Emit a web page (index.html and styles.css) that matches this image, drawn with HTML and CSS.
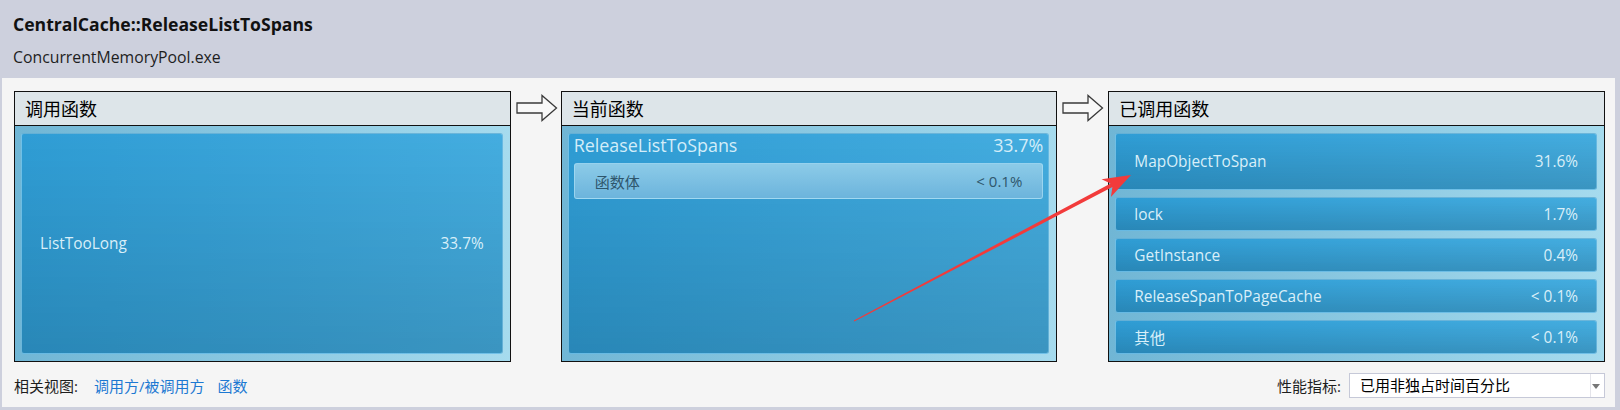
FILE: index.html
```html
<!DOCTYPE html>
<html>
<head>
  <title>CentralCache::ReleaseListToSpans</title>
  <link rel="stylesheet" href="styles.css">
</head>
<body>
  <div class="window">
    <header class="title-bar">
      <h1 class="func-name">CentralCache::ReleaseListToSpans</h1>
      <div class="module-name">ConcurrentMemoryPool.exe</div>
    </header>

    <main class="content">
      <div class="panels">
        <!-- callers -->
        <section class="panel">
          <div class="panel-head">调用函数</div>
          <div class="panel-body">
            <div class="tile tile-fill">
              <span>ListTooLong</span>
              <span>33.7%</span>
            </div>
          </div>
        </section>

        <div class="flow-arrow">
          <svg width="42" height="28" viewBox="0 0 42 28">
            <path d="M1 9 H26 V1.5 L40.5 14 L26 26.5 V19 H1 Z" fill="#f8f8f8" stroke="#3a3a3a" stroke-width="1.3"/>
          </svg>
        </div>

        <!-- current function -->
        <section class="panel">
          <div class="panel-head">当前函数</div>
          <div class="panel-body">
            <div class="tile tile-current">
              <div class="current-title">
                <span>ReleaseListToSpans</span>
                <span>33.7%</span>
              </div>
              <div class="body-row">
                <span>函数体</span>
                <span>&lt; 0.1%</span>
              </div>
            </div>
          </div>
        </section>

        <div class="flow-arrow">
          <svg width="42" height="28" viewBox="0 0 42 28">
            <path d="M1 9 H26 V1.5 L40.5 14 L26 26.5 V19 H1 Z" fill="#f8f8f8" stroke="#3a3a3a" stroke-width="1.3"/>
          </svg>
        </div>

        <!-- callees -->
        <section class="panel">
          <div class="panel-head">已调用函数</div>
          <div class="panel-body callee-list">
            <div class="tile tile-big"><span>MapObjectToSpan</span><span>31.6%</span></div>
            <div class="tile"><span>lock</span><span>1.7%</span></div>
            <div class="tile"><span>GetInstance</span><span>0.4%</span></div>
            <div class="tile"><span>ReleaseSpanToPageCache</span><span>&lt; 0.1%</span></div>
            <div class="tile"><span>其他</span><span>&lt; 0.1%</span></div>
          </div>
        </section>
      </div>

      <div class="footer-row">
        <div class="related">
          <span class="related-label">相关视图:</span>
          <a href="#" class="view-link">调用方/被调用方</a>
          <a href="#" class="view-link">函数</a>
        </div>
        <div class="metric">
          <span class="metric-label">性能指标:</span>
          <div class="metric-select">
            <span>已用非独占时间百分比</span>
            <span class="select-sep"></span>
            <span class="select-caret"></span>
          </div>
        </div>
      </div>
    </main>

    <!-- red annotation arrow drawn over the screenshot -->
    <svg class="annotation" width="1620" height="410" viewBox="0 0 1620 410">
      <polygon fill="#f23b3b" points="853.8,320.4 1110.6,183.5 1101.5,179.2 1131,175 1110.9,196.9 1112.4,187.1 854.2,321.6"/>
    </svg>
  </div>
</body>
</html>
```

FILE: styles.css
```css
body {
  margin: 0;
  font-family: "Open Sans", "Noto Sans CJK SC", sans-serif;
  color: #1e1e1e;
}

.window {
  position: relative;
  width: 1620px;
  height: 410px;
  background-color: #cdd0dd;
  overflow: hidden;
}

.title-bar {
  height: 78px;
  padding-left: 13px;
  box-sizing: border-box;
  padding-top: 12px;
}

.func-name {
  margin: 0;
  font-size: 17.6px;
  line-height: 24px;
  font-weight: bold;
  color: #111;
}

.module-name {
  margin-top: 10px;
  font-size: 15.8px;
  line-height: 22px;
  color: #1e1e1e;
}

.content {
  height: 329px;
  margin: 0 5px 0 2px;
  padding: 13px 10px 0 12px;
  box-sizing: border-box;
  background-color: #f5f5f5;
}

.panels {
  display: grid;
  grid-template-columns: 1fr 50px 1fr 51px 1fr;
  height: 271px;
}

.panel {
  display: flex;
  flex-direction: column;
  border: 1px solid #111;
}

.panel-head {
  height: 33px;
  border-bottom: 1px solid #111;
  background-color: #dde5e9;
  padding-left: 10px;
  font-family: "Noto Sans CJK SC", sans-serif;
  font-size: 18px;
  line-height: 32px;
  color: #000;
}

.panel-body {
  flex-grow: 1;
  display: flex;
  flex-direction: column;
  padding: 7px 7px 7px 6px;
  background: linear-gradient(to right, #70b6d5, #a6dbee);
}

.flow-arrow {
  padding: 3px 0 0 5px;
}

.flow-arrow svg {
  display: block;
}

.tile {
  display: flex;
  justify-content: space-between;
  align-items: center;
  height: 34px;
  box-sizing: border-box;
  padding: 0 18px;
  border: 1px solid rgba(150, 210, 238, 0.55);
  border-radius: 3px;
  background:
    linear-gradient(to bottom, rgba(0, 0, 0, 0), rgba(0, 0, 0, 0.14)),
    linear-gradient(to right, #2f9dd5, #44ade0);
  font-size: 15.4px;
  color: #d9eff9;
}

.tile-fill {
  flex-grow: 1;
  height: auto;
}

.callee-list {
  gap: 7px;
}

.tile-big {
  height: 57px;
}

.tile-current {
  flex-grow: 1;
  height: auto;
  display: block;
  padding: 0 5px;
}

.current-title {
  display: flex;
  justify-content: space-between;
  font-size: 17.9px;
  line-height: 22px;
  color: #d3edf9;
}

.body-row {
  display: flex;
  justify-content: space-between;
  align-items: center;
  height: 36px;
  box-sizing: border-box;
  margin-top: 7px;
  padding: 0 20px;
  border: 1px solid rgba(170, 222, 245, 0.7);
  border-radius: 3px;
  background: linear-gradient(to bottom, #8ccbe8, #6cb4dc);
  font-size: 15px;
  color: #2f566c;
}

.footer-row {
  display: flex;
  justify-content: space-between;
  align-items: center;
  height: 45px;
  padding-top: 1px;
  box-sizing: border-box;
  font-size: 15px;
}

.related {
  display: flex;
  align-items: center;
  margin-left: 0;
}

.view-link {
  color: #1d79d2;
  text-decoration: none;
  margin-left: 16px;
}

.view-link + .view-link {
  margin-left: 13px;
}

.metric {
  display: flex;
  align-items: center;
}

.metric-label {
  margin-right: 8px;
}

.metric-select {
  position: relative;
  width: 256px;
  height: 25px;
  box-sizing: border-box;
  border: 1px solid #c6c9d8;
  background-color: #fff;
  padding-left: 10px;
  line-height: 23px;
  color: #000;
}

.select-sep {
  position: absolute;
  top: 0;
  right: 13px;
  width: 1px;
  height: 23px;
  background-color: #e4e4ea;
}

.select-caret {
  position: absolute;
  top: 10px;
  right: 4px;
  border-left: 4px solid transparent;
  border-right: 4px solid transparent;
  border-top: 5px solid #777;
}

.annotation {
  position: absolute;
  top: 0;
  left: 0;
  pointer-events: none;
}
```
